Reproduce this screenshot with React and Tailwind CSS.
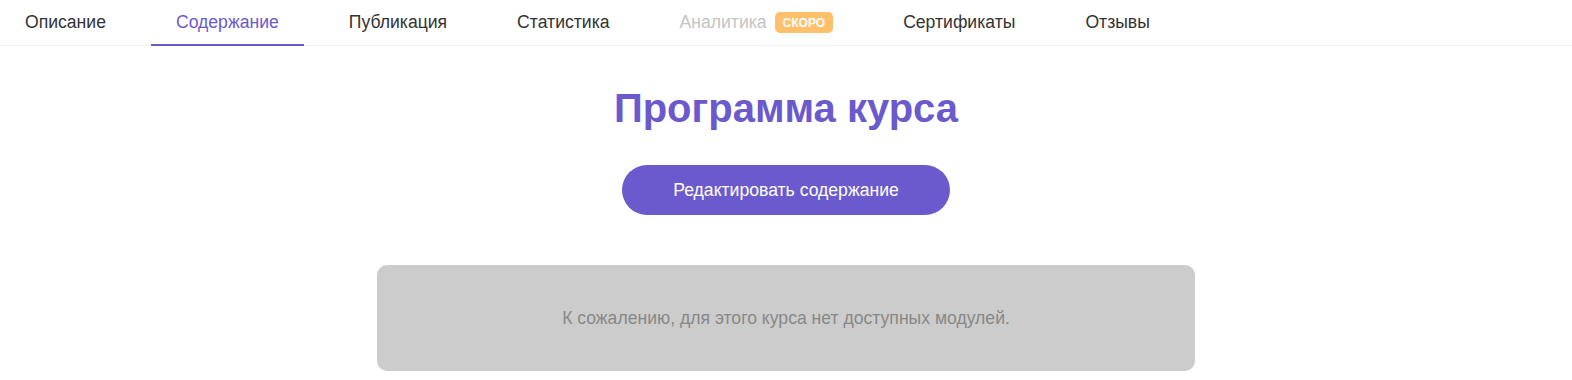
import React from "react";

const tabs = [
  { label: "Описание" },
  { label: "Содержание", active: true },
  { label: "Публикация" },
  { label: "Статистика" },
  { label: "Аналитика", soon: true },
  { label: "Сертификаты" },
  { label: "Отзывы" },
];

export default function App() {
  return (
    <div className="min-h-screen bg-white font-['Liberation_Sans',sans-serif]">
      <nav className="flex gap-5 border-b border-[#f0f0f0] h-[46px]">
        {tabs.map((tab) => (
          <div
            key={tab.label}
            className={
              tab.active
                ? "flex items-center gap-2 px-[25px] text-[17.6px] text-[#6a5acd] border-b-2 border-[#6a5acd] -mb-px"
                : "flex items-center gap-2 px-[25px] text-[17.6px] text-[#333333]"
            }
          >
            <span className={tab.soon ? "text-[#c4c4c4]" : ""}>{tab.label}</span>
            {tab.soon && (
              <span className="bg-[#ffc06b] text-white text-[12px] font-bold rounded-[5px] px-2 h-[21px] flex items-center">
                СКОРО
              </span>
            )}
          </div>
        ))}
      </nav>

      <main className="flex flex-col items-center pt-[38px]">
        <h1 className="text-[40px] leading-[48px] font-bold text-[#6a5acd]">
          Программа курса
        </h1>
        <button className="mt-[33px] w-[328px] h-[50px] rounded-full bg-[#6a5acd] text-white text-[17.6px]">
          Редактировать содержание
        </button>
        <div className="mt-[50px] w-[818px] h-[106px] rounded-[10px] bg-[#cccccc] flex items-center justify-center">
          <p className="text-[17.6px] text-[#888888]">
            К сожалению, для этого курса нет доступных модулей.
          </p>
        </div>
      </main>
    </div>
  );
}
